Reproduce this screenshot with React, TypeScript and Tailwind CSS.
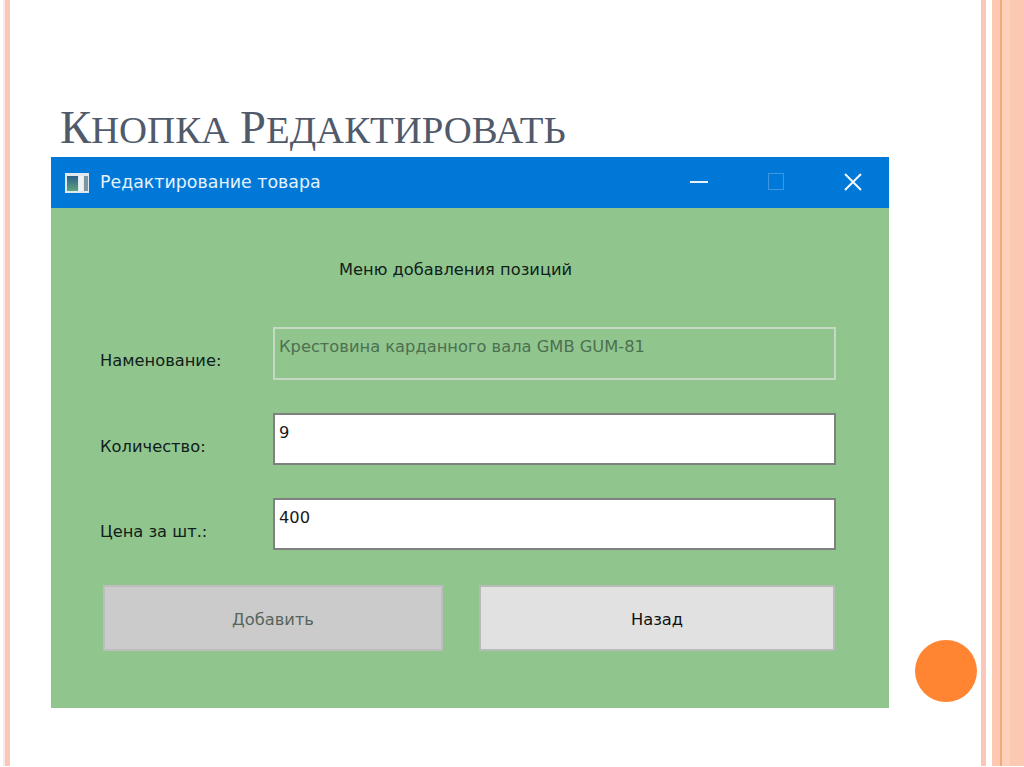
const labelFont = "font-['DejaVu_Sans',sans-serif] text-[16.3px] leading-[20px]";

const Field = ({ label, value, disabled }: { label: string; value: string; disabled?: boolean }) => (
  <div className={`flex items-start ${disabled ? "h-[53px]" : "h-[52px]"}`}>
    <div className={`${labelFont} w-[222px] pl-[49px] pt-[24px] text-[#10201a]`}>{label}</div>
    <div
      className={`w-[563px] h-full border-2 pl-[4px] pt-[8px] ${labelFont} ${
        disabled ? "border-[#c4d8c4] text-[#4d6f50]" : "border-[#808080] bg-white text-[#1a1a1a]"
      }`}
    >
      {value}
    </div>
  </div>
);

const WinIcon = () => (
  <svg width="26" height="22" viewBox="0 0 26 22">
    <defs>
      <linearGradient id="pane" x1="0" y1="0" x2="0" y2="1">
        <stop offset="0" stopColor="#2c5f8a" />
        <stop offset="1" stopColor="#5fa37a" />
      </linearGradient>
    </defs>
    <rect x="1" y="1" width="24" height="20" fill="#dfe8ee" />
    <rect x="3" y="4" width="11" height="15" fill="url(#pane)" />
    <rect x="15" y="4" width="4" height="15" fill="#eef2f2" />
    <rect x="20" y="4" width="4" height="15" fill="#7d95a2" />
  </svg>
);

const SmallCapsWord = ({ word }: { word: string }) => (
  <span>
    <span className="text-[46.6px]">{word[0]}</span>
    <span className="text-[38.8px] uppercase">{word.slice(1)}</span>
  </span>
);

export default function App() {
  return (
    <div className="relative flex w-[1024px] h-[767px] bg-white overflow-hidden">
      <div className="w-[3px]" />
      <div className="w-[2px] h-[766px] bg-[#fee9e2]" />
      <div className="w-[5px] h-[766px] bg-[#fbc7b8]" />
      <main className="flex-1 pl-[41px] min-w-0">
        <h1 className="h-[157px] pt-[98px] pl-[9px] font-['Liberation_Serif',serif] leading-[59px] text-[#505a6b] whitespace-nowrap flex gap-[11px] items-baseline">
          <SmallCapsWord word="Кнопка" />
          <SmallCapsWord word="Редактировать" />
        </h1>
        <div className="w-[838px] h-[551px] bg-[#90c68e] flex flex-col">
          <div className="h-[51px] bg-[#0078d7] flex items-center pl-[13px] text-white">
            <WinIcon />
            <span className={`${labelFont} text-[17.4px] ml-[10px] pb-[2px] text-[#e6f2fc]`}>Редактирование товара</span>
            <div className="ml-auto flex items-center pr-[27px] pb-[2px] gap-[60px]">
              <div className="w-[18px] h-[2px] bg-[#e8f2fb]" />
              <div className="w-[16px] h-[17px] border border-[#3c97e0]" />
              <svg width="18" height="18" viewBox="0 0 18 18" stroke="#f2f8fd" strokeWidth="2">
                <path d="M1 1 L17 17 M17 1 L1 17" />
              </svg>
            </div>
          </div>
          <div className="pt-[49px] pl-[288px] h-[119px]">
            <span className={`${labelFont} text-[#10201a]`}>Меню добавления позиций</span>
          </div>
          <div className="flex flex-col gap-[33px]">
            <Field label="Наменование:" value="Крестовина карданного вала GMB GUM-81" disabled />
            <Field label="Количество:" value="9" />
            <Field label="Цена за шт.:" value="400" />
          </div>
          <div className="flex mt-[35px] pl-[52px] gap-[36px]">
            <div className={`w-[340px] h-[66px] pt-[4px] bg-[#cbcbcb] border-2 border-[#bdbdbd] flex items-center justify-center ${labelFont} text-[#56655c]`}>
              Добавить
            </div>
            <div className={`w-[356px] h-[66px] pt-[4px] bg-[#e1e1e1] border-2 border-[#b5bcb5] flex items-center justify-center ${labelFont} text-[#111]`}>
              Назад
            </div>
          </div>
        </div>
      </main>
      <div className="w-[43px] flex items-stretch h-[766px] shrink-0">
        <div className="w-[5px] bg-[#fbc7b8]" />
        <div className="w-[6px]" />
        <div className="flex-1 bg-[#fdc8b2] flex">
          <div className="w-[8px]" />
          <div className="w-[2px] bg-[#f5a878]" />
          <div className="w-[8px] bg-[#fdd0bc]" />
        </div>
      </div>
      <div className="absolute left-[915px] top-[640px] w-[62px] h-[62px] rounded-full bg-[#ff8533]" />
    </div>
  );
}
